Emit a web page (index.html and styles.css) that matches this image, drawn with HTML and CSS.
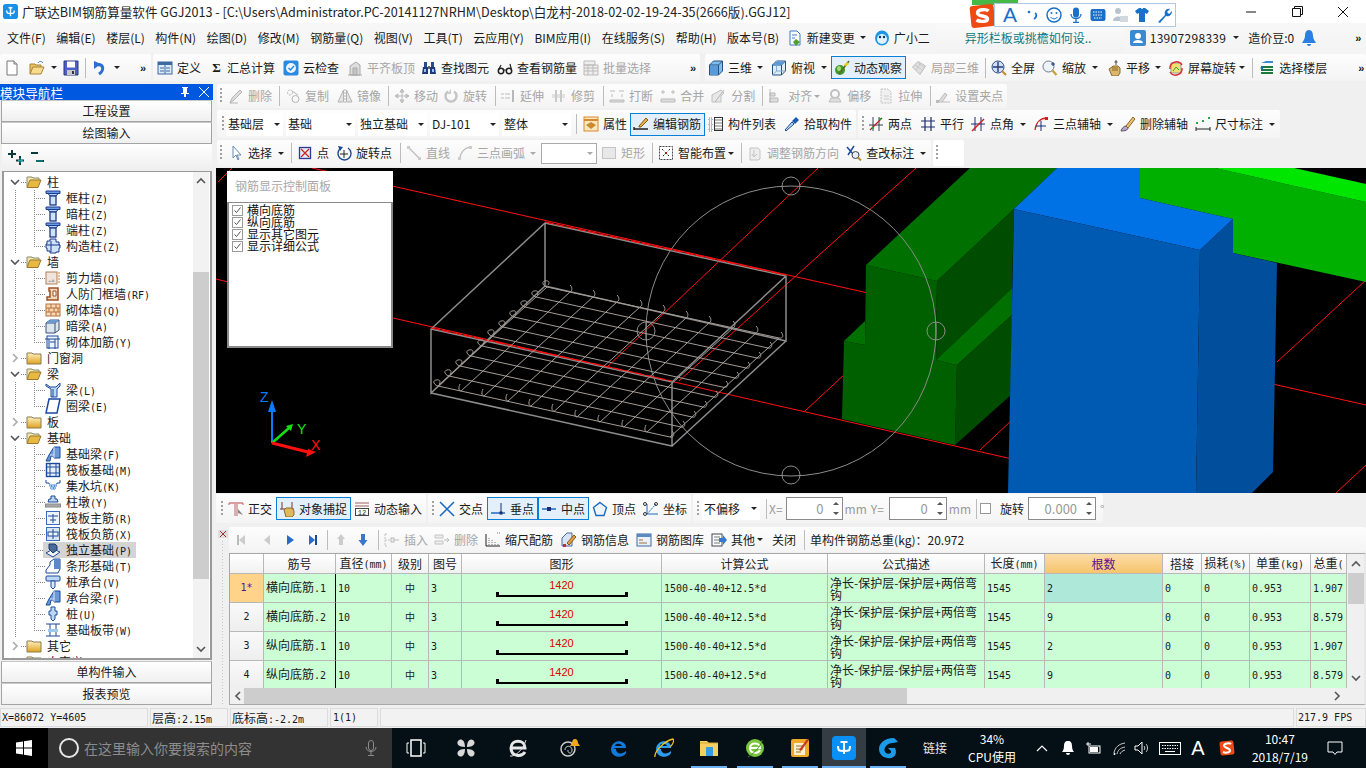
FILE: index.html
```html
<!DOCTYPE html>
<html lang="zh-CN">
<head>
<meta charset="utf-8">
<title>广联达BIM钢筋算量软件 GGJ2013</title>
<link rel="stylesheet" href="styles.css">
</head>
<body>
<svg class="defs" aria-hidden="true">
<symbol id="new" viewBox="0 0 16 16"><path d="M3 1h7l3 3v11H3z" fill="#fff" stroke="#777"/><path d="M10 1v3h3" fill="#ddd" stroke="#777"/></symbol>
<symbol id="open" viewBox="0 0 16 16"><path d="M1 14V4h5l1 1h5v2" fill="#e8c060" stroke="#a8843a"/><path d="M1 14l3-7h11l-3 7z" fill="#f7dc8e" stroke="#a8843a"/><path d="M9 3c1-2 4-2 5 0" stroke="#3a78c8" fill="none"/></symbol>
<symbol id="save" viewBox="0 0 16 16"><path d="M1 1h14v14H1z" fill="#5060c8" stroke="#2a3480"/><rect x="4" y="1.500" width="8" height="6" fill="#fff"/><rect x="4" y="10" width="8" height="5" fill="#c8c8c8"/><rect x="9" y="11" width="2" height="3" fill="#334"/></symbol>
<symbol id="undo" viewBox="0 0 16 16"><path d="M6 5c5-1 7 5 1 9" stroke="#2a70d0" stroke-width="3" fill="none"/><path d="M2 1v8l7-5z" fill="#2a70d0"/></symbol>
<symbol id="def" viewBox="0 0 16 16"><rect x="1" y="2" width="14" height="12" fill="#dce9f6" stroke="#3a6aa0"/><rect x="1" y="2" width="14" height="3" fill="#3a6aa0"/><path d="M3 8h4M3 11h4M9 8h4M9 11h4M8 5v9" stroke="#3a6aa0"/></symbol>
<symbol id="cloud" viewBox="0 0 16 16"><rect x="0.500" y="0.500" width="15" height="15" rx="2" fill="#2a8ae0"/><circle cx="8" cy="8" r="5" fill="#eaf4fd"/><path d="M5.500 8l2 2 3.500-4" stroke="#2a8ae0" stroke-width="1.500" fill="none"/></symbol>
<symbol id="align" viewBox="0 0 16 16"><path d="M3 15V6l6-4 4 3v10z" fill="#ddd" stroke="#aaa"/><path d="M6 8h4v7H6zM1 15h14" fill="#c4c4c4" stroke="#aaa"/></symbol>
<symbol id="find" viewBox="0 0 16 16"><path d="M3 2h3v5H3zM10 2h3v5h-3z" fill="#2a4a8a"/><path d="M2 7h5v7H1zM9 7h5l1 7H9z" fill="#1c3a7a"/><path d="M7 6h2v3H7z" fill="#666"/><path d="M3 9h2v3H3zM11 9h2v3h-2z" fill="#9ac0ee"/></symbol>
<symbol id="look" viewBox="0 0 16 16"><circle cx="4" cy="11" r="2.700" fill="none" stroke="#222" stroke-width="1.500"/><circle cx="12" cy="11" r="2.700" fill="none" stroke="#222" stroke-width="1.500"/><path d="M6.500 10h3M1.500 10L4 5M14.500 10L13 4" stroke="#222" fill="none" stroke-width="1.200"/></symbol>
<symbol id="batch" viewBox="0 0 16 16"><path d="M1 1h11v4H1zM1 5h14v10H1z" fill="#eee" stroke="#bbb"/><path d="M1 8h14M1 11h14M5 5v10M10 5v10" stroke="#bbb"/></symbol>
<symbol id="cube" viewBox="0 0 16 16"><path d="M1.500 5l4-4h9v10l-4 4h-9z" fill="#82bced" stroke="#24527e"/><path d="M1.500 5h9v10M10.500 5l4-4" fill="none" stroke="#24527e"/><path d="M2 5.500h8V15H2z" fill="#5a9ad8"/></symbol>
<symbol id="tops" viewBox="0 0 16 16"><path d="M1.500 5l4-4h9v10l-4 4h-9z" fill="#dcecfa" stroke="#24527e"/><path d="M1.500 5h9v10M10.500 5l4-4" fill="none" stroke="#24527e"/><path d="M5.500 1v10h9M5.500 11l-4 4" fill="none" stroke="#88aacc"/><path d="M6 1.500h8L10 5H2z" fill="#5a9ad8"/></symbol>
<symbol id="orbit" viewBox="0 0 16 16"><ellipse cx="6" cy="10" rx="5" ry="5" fill="#3f9a2e"/><ellipse cx="5" cy="8.500" rx="2" ry="2.500" fill="#a6dc78"/><path d="M5 14L15 1" stroke="#5b6b2a" stroke-width="1.600"/><path d="M10 5l3-3 2 2-3 2z" fill="#f0d000"/></symbol>
<symbol id="loc3d" viewBox="0 0 16 16"><path d="M1.500 7L7 1.500 14.500 6 9 14.500z" fill="#e0e0e0" stroke="#bbb"/><path d="M4 5l7 5M7 2.500l6 5M5 10l4-6" stroke="#c8c8c8"/></symbol>
<symbol id="full" viewBox="0 0 16 16"><circle cx="7" cy="7" r="6" fill="#d0e0f5" stroke="#2c4a80"/><path d="M7 2v10M2 7h10" stroke="#243c7a" stroke-width="1.400"/><path d="M11 11l4 4" stroke="#c08a30" stroke-width="2"/></symbol>
<symbol id="zoomi" viewBox="0 0 16 16"><circle cx="6.500" cy="6.500" r="5.500" fill="#eef3f8" stroke="#6a7a90"/><path d="M10.500 10.500l4 4.500" stroke="#c8a030" stroke-width="2.200"/><path d="M11 2v4M9 4h4" stroke="#1c3a7a"/></symbol>
<symbol id="pan" viewBox="0 0 16 16"><path d="M3 9l3-2 1-1h5l2 2v5l-2 3H6z" fill="#dcb66a" stroke="#8a6a2a"/><path d="M7 7v4M9 7v4M11 7v4" stroke="#8a6a2a"/><path d="M10 0v5M8.500 2h3" stroke="#445"/></symbol>
<symbol id="rota" viewBox="0 0 16 16"><rect x="3" y="3" width="10" height="10" fill="#f0e070" stroke="#90a0b0"/><path d="M5 11l3-4 3 3" stroke="#40a040" fill="none"/><path d="M2 9a6.500 6.500 0 0 1 12-4M14 8a6.500 6.500 0 0 1-12 4" stroke="#d83030" stroke-width="1.400" fill="none"/></symbol>
<symbol id="floors" viewBox="0 0 16 16"><path d="M2 3l5-2h7v2H7z" fill="#3a8ad8"/><path d="M2 7h12M2 10h12M2 13h12" stroke="#1c7a3a" stroke-width="2"/><path d="M1 8l3-2v4z" fill="#1c6a9a"/></symbol>
<symbol id="del" viewBox="0 0 16 16"><path d="M2 15l2-5 8-8 2 2-8 8z" fill="#ddd" stroke="#b4b4b4"/><path d="M2 15h8" stroke="#b4b4b4"/></symbol>
<symbol id="copy" viewBox="0 0 16 16"><circle cx="5" cy="4.500" r="2.500" fill="none" stroke="#b4b4b4" stroke-dasharray="2 1"/><circle cx="10.500" cy="11" r="3.500" fill="none" stroke="#b4b4b4"/><path d="M7 3l6 4" stroke="#b4b4b4"/></symbol>
<symbol id="mirr" viewBox="0 0 16 16"><path d="M6.500 2v12H1zM9.500 2v12H15z" fill="#e4e4e4" stroke="#b4b4b4"/><path d="M8 1v14" stroke="#b4b4b4" stroke-dasharray="2 1"/></symbol>
<symbol id="move" viewBox="0 0 16 16"><path d="M8 1v14M1 8h14M8 1L6 4h4zM8 15l-2-3h4zM1 8l3-2v4zM15 8l-3-2v4z" stroke="#bbb" fill="#ccc"/></symbol>
<symbol id="roti" viewBox="0 0 16 16"><path d="M5 3.500a5.500 5.500 0 1 0 6 0" stroke="#c4c4c4" stroke-width="2.400" fill="none"/><path d="M8 1v5H4" fill="#ccc"/></symbol>
<symbol id="ext" viewBox="0 0 16 16"><path d="M13 2v12" stroke="#b8b8b8" stroke-width="2"/><path d="M1 6h3M1 10h3M5 6h5M5 10h5" stroke="#bbb"/></symbol>
<symbol id="trim" viewBox="0 0 16 16"><path d="M5 2v12M10 2v12" stroke="#bbb" stroke-width="1.500"/><path d="M1 7h13M1 9h13" stroke="#ccc"/></symbol>
<symbol id="brk" viewBox="0 0 16 16"><path d="M1 3h5M10 3h5M1 12h14v2H1z" stroke="#bbb" fill="#ddd"/><path d="M3 6v3M13 6v3" stroke="#bbb"/></symbol>
<symbol id="merg" viewBox="0 0 16 16"><path d="M1 4h4M11 4h4M3 2v4M13 2v4" stroke="#bbb"/><path d="M1 11h14v3H1z" fill="#ddd" stroke="#bbb"/></symbol>
<symbol id="splt" viewBox="0 0 16 16"><path d="M1 14V7l9-5 3 3-3 3v6z" fill="#e8e8e8" stroke="#c0c0c0"/><path d="M4 14l9-12" stroke="#b4b4b4"/></symbol>
<symbol id="algn" viewBox="0 0 16 16"><path d="M2 1v14M2 5h5v3H2zM2 10h8v4H2z" fill="#ddd" stroke="#b8b8b8"/></symbol>
<symbol id="offs" viewBox="0 0 16 16"><circle cx="8" cy="6" r="4" fill="none" stroke="#c0c0c0" stroke-width="2"/><path d="M2 14h12l-2-4H4z" fill="#ddd" stroke="#c0c0c0"/></symbol>
<symbol id="strc" viewBox="0 0 16 16"><path d="M3 1h7l3 3v11H3z" fill="#f0f0f0" stroke="#c0c0c0" stroke-dasharray="2 1"/><path d="M6 8h5M6 11h5" stroke="#ccc"/></symbol>
<symbol id="grip" viewBox="0 0 16 16"><path d="M3 14l7-9 2 2-5 7z" fill="#ddd" stroke="#bbb"/><rect x="1" y="12" width="3" height="3" fill="#bbb"/><path d="M7 14h8" stroke="#bbb"/></symbol>
<symbol id="attr" viewBox="0 0 16 16"><rect x="1" y="1" width="14" height="14" fill="#fbe7bd" stroke="#d98a2a"/><path d="M1 4h14" stroke="#d98a2a" stroke-width="2"/><path d="M3 9l5-3 5 3-5 4z" fill="#c98a30"/></symbol>
<symbol id="edit" viewBox="0 0 16 16"><path d="M6 10l7-8 2 2-7 7H6z" fill="#e8b040" stroke="#8a5a20"/><path d="M1 13h14M1 11v3" stroke="#222" stroke-width="1.400"/></symbol>
<symbol id="list" viewBox="0 0 16 16"><path d="M1 2h3v3H1zM1 7h3v3H1zM1 12h3v3H1z" fill="none" stroke="#4a7ab0" stroke-dasharray="1 1"/><rect x="6.500" y="1.500" width="8" height="13" fill="#fff" stroke="#333"/><path d="M7 4h7M7 7h7M7 10h7M7 13h7" stroke="#777"/></symbol>
<symbol id="pick" viewBox="0 0 16 16"><path d="M2 15l-1-1 7-8 2 2z" fill="#bcd8f4" stroke="#1c4a9a"/><path d="M8 5l4-4 3 3-4 4z" fill="#1c5ab0"/></symbol>
<symbol id="twop" viewBox="0 0 16 16"><path d="M5 1v14M11 1v14M1 9h14" stroke="#345"/><path d="M2 14L14 2" stroke="#c02020" stroke-width="1.200"/><path d="M4 11h2v2H4zM11 2h2v2h-2z" fill="#30a040"/></symbol>
<symbol id="para" viewBox="0 0 16 16"><path d="M1 5h14M1 11h14M5 1v14M11 1v14" stroke="#1c2a70" stroke-width="1.200"/></symbol>
<symbol id="angl" viewBox="0 0 16 16"><path d="M5 1v14M11 1v14M1 8h14" stroke="#1c2a70"/><path d="M2 15L14 3" stroke="#d02020" stroke-width="1.400"/></symbol>
<symbol id="tri" viewBox="0 0 16 16"><path d="M2 14C3 6 8 2 14 2" stroke="#d02020" fill="none" stroke-width="1.300"/><path d="M8 5v10M3 10h10" stroke="#1c2a70"/><rect x="12" y="1" width="3" height="3" fill="#d02020"/></symbol>
<symbol id="dela" viewBox="0 0 16 16"><path d="M1 15c1-3 3-5 5-5l2 2c0 2-3 3-7 3z" fill="#c0a0d0" stroke="#555"/><path d="M6 10l7-9 2 2-7 9z" fill="#e8c070" stroke="#8a6a2a"/></symbol>
<symbol id="dim" viewBox="0 0 16 16"><path d="M1 11v4M15 11v4M1 13h14" stroke="#222"/><path d="M1 6h2v2H1zM13 1h2v2h-2zM7 4h2v2H7z" fill="#30a040"/></symbol>
<symbol id="arrow" viewBox="0 0 16 16"><path d="M5 1v12l3-3 2 5 1-1-2-4h4z" fill="#fff" stroke="#6a8ab0"/></symbol>
<symbol id="pt" viewBox="0 0 16 16"><rect x="2.500" y="2.500" width="11" height="11" fill="#e4ecfa" stroke="#2c3a9a" stroke-width="1.300"/><path d="M4 4l8 8M12 4l-8 8" stroke="#d02020" stroke-width="1.300"/></symbol>
<symbol id="rotp" viewBox="0 0 16 16"><path d="M5 3a6.500 6.500 0 1 0 7 0" fill="none" stroke="#1c4a90" stroke-width="1.400"/><path d="M8 5v8M4 9h8" stroke="#222"/><path d="M2 1l5 1-3 4z" fill="#1c4a90"/></symbol>
<symbol id="line" viewBox="0 0 16 16"><path d="M2 2l12 12" stroke="#c0c0c0" stroke-width="1.400"/><rect x="1" y="1" width="3" height="3" fill="#ccc"/><rect x="12" y="12" width="3" height="3" fill="#ccc"/></symbol>
<symbol id="arc" viewBox="0 0 16 16"><path d="M3 14C3 8 7 3 13 2" stroke="#c0c0c0" fill="none" stroke-width="1.400"/><rect x="1" y="12" width="3" height="3" fill="#ccc"/><rect x="12" y="1" width="3" height="3" fill="#ccc"/></symbol>
<symbol id="rect" viewBox="0 0 16 16"><rect x="1.500" y="2.500" width="13" height="11" fill="#e8e8e8" stroke="#c4c4c4"/></symbol>
<symbol id="smart" viewBox="0 0 16 16"><rect x="1.500" y="1.500" width="13" height="13" fill="#fff" stroke="#445" stroke-dasharray="2 1"/><path d="M4 4l8 8M12 4l-8 8" stroke="#222" stroke-dasharray="2 2"/><path d="M7 7h2v2H7z" fill="#a02020"/></symbol>
<symbol id="adj" viewBox="0 0 16 16"><path d="M3 3h8l2 2v9l-2 1H3z" fill="#eee" stroke="#c4c4c4"/><path d="M7 5v7M5 9l2 3 3-3" stroke="#c4c4c4" fill="none"/></symbol>
<symbol id="chk" viewBox="0 0 16 16"><path d="M1 2l6 7M8 1L2 10" stroke="#1c4a9a" stroke-width="1.500"/><circle cx="9.500" cy="10" r="3.500" fill="#e8eef6" stroke="#444"/><path d="M12 12.500l3 3" stroke="#b88a30" stroke-width="2"/></symbol>
<symbol id="orth" viewBox="0 0 16 16"><path d="M1 2h14M1 2v2M15 2v2" stroke="#d08080" stroke-width="1.300"/><path d="M6 3h4v12H6z" fill="#d8b0b0"/><path d="M10 8l5 6-5-2z" fill="#888"/></symbol>
<symbol id="snap" viewBox="0 0 16 16"><path d="M3 1v7M13 1v7M1 8h14" stroke="#7a3020"/><path d="M5 9l2-2h6l2 3v4l-2 2H7z" fill="#e0b860" stroke="#8a6a2a"/></symbol>
<symbol id="dyn" viewBox="0 0 16 16"><path d="M1 2h14M1 5h14" stroke="#a06060"/><rect x="1.500" y="7.500" width="13" height="7" fill="#fff" stroke="#444"/><text x="8" y="14" font-size="7" text-anchor="middle" font-family="Liberation Mono,monospace" fill="#222">12</text></symbol>
<symbol id="cross" viewBox="0 0 16 16"><path d="M1 1l14 14M15 1L1 15" stroke="#1c6ac0" stroke-width="1.500"/></symbol>
<symbol id="perp" viewBox="0 0 16 16"><path d="M1 12h14" stroke="#1c6ac0" stroke-width="1.500"/><path d="M11 2v10" stroke="#1c2a70"/><rect x="9.500" y="10.500" width="3" height="3" fill="#1c2a70"/></symbol>
<symbol id="midp" viewBox="0 0 16 16"><path d="M1 8h14" stroke="#1c6ac0" stroke-width="1.500"/><rect x="6" y="6" width="4" height="4" fill="#1c2a70"/></symbol>
<symbol id="vert" viewBox="0 0 16 16"><path d="M8 1.500l6.500 5-2.500 8H4l-2.500-8z" fill="#eef4fc" stroke="#1c6ac0" stroke-width="1.400"/></symbol>
<symbol id="coor" viewBox="0 0 16 16"><path d="M4 3v10h11" stroke="#1c6ac0" fill="none"/><path d="M4 13L13 3" stroke="#1c6ac0" stroke-dasharray="2 1"/><circle cx="2" cy="3" r="1.500" fill="none" stroke="#333"/><circle cx="13" cy="3" r="1.500" fill="none" stroke="#333"/><circle cx="2" cy="13" r="1.500" fill="none" stroke="#333"/></symbol>
<symbol id="first" viewBox="0 0 10 16"><path d="M1 3h2v10H1z" fill="#bbb"/><path d="M9 3v10L3 8z" fill="#ccc"/></symbol>
<symbol id="prev" viewBox="0 0 10 16"><path d="M8 3v10L2 8z" fill="#ccc"/></symbol>
<symbol id="next" viewBox="0 0 10 16"><path d="M2 3v10l7-5z" fill="#2a6ac8"/></symbol>
<symbol id="last" viewBox="0 0 10 16"><path d="M1 3v10l6-5z" fill="#2a6ac8"/><path d="M7 3h2v10H7z" fill="#1c4a9a"/></symbol>
<symbol id="up" viewBox="0 0 10 16"><path d="M5 2l4 5H7v6H3V7H1z" fill="#ccc"/></symbol>
<symbol id="down" viewBox="0 0 10 16"><path d="M3 2h4v6h2.500L5 14 .5 8H3z" fill="#3a78d0"/></symbol>
<symbol id="ins" viewBox="0 0 16 16"><path d="M1 2v12M1 2h3M1 14h3M1 8h9" stroke="#c4c4c4" stroke-dasharray="2 1"/><rect x="7" y="6" width="3" height="4" fill="#eee" stroke="#bbb"/><path d="M10 8h5" stroke="#bbb"/></symbol>
<symbol id="dele" viewBox="0 0 16 16"><path d="M1 3h8v3H1zM1 9h8v3H1z" fill="#eee" stroke="#c4c4c4"/><path d="M10 8h5M13 6l2 2-2 2" stroke="#bbb" fill="none"/></symbol>
<symbol id="scal" viewBox="0 0 16 16"><path d="M1 2v12h14" stroke="#222" fill="none"/><path d="M4 13V5M7 13V8M10 13v-3M13 13v-1M12 1h3" stroke="#777" stroke-dasharray="1 1"/></symbol>
<symbol id="info" viewBox="0 0 16 16"><path d="M1 14V6l5-5h5v13z" fill="#d8e4f4" stroke="#4a6a9a"/><path d="M6 11l7-8 2 2-7 8z" fill="#e0a040" stroke="#8a5a20"/><rect x="2" y="12" width="3" height="3" fill="#c03030"/></symbol>
<symbol id="lib" viewBox="0 0 16 16"><rect x="1" y="2" width="14" height="12" fill="#eaf1fa" stroke="#3a6aa0"/><rect x="1" y="2" width="14" height="3" fill="#5a8ac0"/><path d="M3 8h4M3 11h8" stroke="#a07030"/></symbol>
<symbol id="oth" viewBox="0 0 16 16"><rect x="1" y="2" width="10" height="12" fill="#fff" stroke="#445"/><path d="M3 5h6M3 8h6M3 11h6" stroke="#777"/><path d="M8 6h4V3l4 5-4 5v-3H8z" fill="#3a78d0"/></symbol>
<symbol id="fopen" viewBox="0 0 16 16"><path d="M1 13V3h5l1 1h6v2" fill="#f4e4b0" stroke="#8a8a6a"/><path d="M1 13.500L4 6h11l-3 7.500z" fill="#e8b840" stroke="#9a7a30"/></symbol>
<symbol id="fclose" viewBox="0 0 16 16"><path d="M1 14V3h5l1 1h8v10z" fill="url(#fg)" stroke="#8a7a50"/></symbol>
<linearGradient id="fg" x1="0" y1="0" x2="0" y2="1"><stop offset="0" stop-color="#fdf2c0"/><stop offset="1" stop-color="#e0a020"/></linearGradient>
<symbol id="tc" viewBox="0 0 16 16"><path d="M1 1h14v2.500H1z" fill="#6a9ae0" stroke="#1a3a8a"/><path d="M3 3.500h10L11 6H5z" fill="#bcd4f4" stroke="#1a3a8a"/><rect x="5" y="6" width="6" height="9" fill="#cfe2fa" stroke="#1a3a8a" stroke-width="1.300"/></symbol>
<symbol id="gz" viewBox="0 0 16 16"><path d="M5 1h6v3h3v3h1v3h-1v4h-3v1H5v-2H2v-3H1V6h1V3h3z" fill="#cfe2fa" stroke="#1a3a8a"/><path d="M6 3v11M1 7h14" stroke="#1a3a8a"/></symbol>
<symbol id="shear" viewBox="0 0 16 16"><rect x="1" y="2" width="11" height="12" fill="#f0e4dc" stroke="#b0805a"/><path d="M3 12l2-2 1 2 2-3 2 3H3z" fill="#aaa"/><path d="M13 3h2M13 6h2M13 9h2M13 12h2" stroke="#d08040"/></symbol>
<symbol id="rf" viewBox="0 0 16 16"><path d="M4 2h9v12H2v-3h3V5H4z" fill="#f0d8c0" stroke="#a05020" stroke-width="1.500"/><path d="M8 5h3v5H8z" fill="#fff" stroke="#a05020"/></symbol>
<symbol id="brick" viewBox="0 0 16 16"><rect x="1" y="2" width="14" height="12" fill="#f6d8b8" stroke="#b8703a"/><path d="M1 6h14M1 10h14M6 2v4M11 2v4M4 6v4M9 6v4M13 6v4M6 10v4M11 10v4" stroke="#b8703a"/></symbol>
<symbol id="hbeam" viewBox="0 0 16 16"><path d="M1 5l4-3h9v10l-4 3H1z" fill="#dce4ec" stroke="#34527e"/><path d="M1 5h9v10M10 5l4-3" fill="none" stroke="#34527e"/><path d="M1 5h9l4-3H5z" fill="#6a9ad0"/></symbol>
<symbol id="mas" viewBox="0 0 16 16"><rect x="2" y="2" width="11" height="12" fill="#eef4fb" stroke="#1a4aa0"/><path d="M0 5h15M4 5v10M10 5v10M5 8h5" stroke="#1a4aa0"/></symbol>
<symbol id="bm" viewBox="0 0 16 16"><path d="M1 2l4 3h6l4-4v3l-3 3v8H6V7L1 4z" fill="#bcd8f4" stroke="#1a4a9a"/><path d="M8 7v8" stroke="#1a4a9a"/></symbol>
<symbol id="ring" viewBox="0 0 16 16"><path d="M4 1h11l-3 14H1z" fill="#fff" stroke="#1a4aa0" stroke-width="1.500"/></symbol>
<symbol id="fbm" viewBox="0 0 16 16"><path d="M1 15l3-6 5-8h6v11H9l-1-2H6l-1 5z" fill="#6a98d8" stroke="#1a4a9a"/><path d="M9 1v11M5 9h4" stroke="#dce8f8"/></symbol>
<symbol id="raft" viewBox="0 0 16 16"><rect x="1.500" y="1.500" width="13" height="13" fill="#e8f0fb" stroke="#1a4a9a" stroke-width="1.400"/><path d="M5 1v14M11 1v14M1 5h14M1 11h14" stroke="#1a4a9a"/></symbol>
<symbol id="sump" viewBox="0 0 16 16"><path d="M1 2v3h3l2 6h4l2-6h3V2" fill="none" stroke="#1a4a9a"/><path d="M4 6h8l-2 6H6z" fill="#9cc8ee"/><path d="M6 8h1M9 8h1M8 10h1" stroke="#1a4a9a"/></symbol>
<symbol id="pier" viewBox="0 0 16 16"><path d="M6 2h4v3h2l1 3H3l1-3h2z" fill="#bcd4ec" stroke="#1a4a9a"/><rect x="0.500" y="10" width="15" height="3" fill="#aaa" stroke="#888"/></symbol>
<symbol id="rm" viewBox="0 0 16 16"><rect x="1.500" y="1.500" width="13" height="13" fill="#eef4fc" stroke="#3a6ac0"/><path d="M3 6h10M8 4v9M5 10h6" stroke="#1a4a9a"/></symbol>
<symbol id="rn" viewBox="0 0 16 16"><rect x="1.500" y="1.500" width="13" height="13" fill="#d8e6f6" stroke="#3a6ac0"/><rect x="3" y="6" width="10" height="4" fill="#f0f4fa" stroke="#1a4a9a"/><path d="M8 3v10" stroke="#1a4a9a"/></symbol>
<symbol id="ind" viewBox="0 0 16 16"><path d="M1 11l7-4 7 3-7 5z" fill="#f0f4fb" stroke="#1a4a9a"/><path d="M4 7V2h6l2 2v4l-4 3z" fill="#4a6a9a" stroke="#1a3a6a"/></symbol>
<symbol id="strip" viewBox="0 0 16 16"><path d="M1 15v-3l4-5V4l4-3h6v10l-2 4z" fill="#fff" stroke="#1a4a9a"/><path d="M9 1v10h6V1z" fill="#5a88c8"/></symbol>
<symbol id="capv" viewBox="0 0 16 16"><rect x="1" y="2" width="14" height="5" rx="1" fill="#bcd8f4" stroke="#1a4a9a"/><path d="M6 7h4v6l-2 2-2-2z" fill="#dce8f8" stroke="#1a4a9a"/></symbol>
<symbol id="pile" viewBox="0 0 16 16"><path d="M6 1h4v4h2v4h-2v4l-2 2-2-2V9H4V5h2z" fill="#bcd8f4" stroke="#1a4a9a"/></symbol>
<symbol id="band" viewBox="0 0 16 16"><path d="M1 2h14M1 14h14M5 2v12M11 2v12" stroke="#1a4a9a"/><path d="M3 7h10v3H3z" fill="#9cc8ee"/></symbol>
<symbol id="chevd" viewBox="0 0 10 10"><path d="M1 3l4 4 4-4" fill="none" stroke="#555" stroke-width="1.600"/></symbol>
<symbol id="chevr" viewBox="0 0 10 10"><path d="M3 1l4 4-4 4" fill="none" stroke="#aaa" stroke-width="1.600"/></symbol>
<symbol id="chevu" viewBox="0 0 10 10"><path d="M1 7l4-4 4 4" fill="none" stroke="#555" stroke-width="1.600"/></symbol>
<symbol id="chevl" viewBox="0 0 10 10"><path d="M7 1L3 5l4 4" fill="none" stroke="#555" stroke-width="1.600"/></symbol>
<symbol id="chevrd" viewBox="0 0 10 10"><path d="M3 1l4 4-4 4" fill="none" stroke="#555" stroke-width="1.600"/></symbol>
<symbol id="ck" viewBox="0 0 11 11"><rect x="0.500" y="0.500" width="10" height="10" fill="#fff" stroke="#9a9a9a"/><path d="M2.500 5.500l2 2 4-5" fill="none" stroke="#555"/></symbol>
</svg>

<div class="app">
<header class="title">
  <svg class="appic" viewBox="0 0 16 16"><rect width="16" height="16" rx="3" fill="#1790e8"/><path d="M8 3v10M4 7c0 3 1 3 4 3s4 0 4-3M6 4h4" stroke="#fff" stroke-width="1.500" fill="none"/></svg>
  <span class="ttext">广联达BIM钢筋算量软件 GGJ2013 - [C:\Users\Administrator.PC-20141127NRHM\Desktop\白龙村-2018-02-02-19-24-35(2666版).GGJ12]</span>
  <div class="winbtns">
    <svg viewBox="0 0 46 23"><path d="M18 12h10" stroke="#111"/></svg>
    <svg viewBox="0 0 46 23"><path d="M18.500 8.500h8v8h-8zM20.500 8.500v-2h8v8h-2" fill="none" stroke="#111"/></svg>
    <svg viewBox="0 0 46 23"><path d="M18 7l10 10M28 7L18 17" stroke="#111"/></svg>
  </div>
</header>

<aside class="ime">
  <div class="imegreen"></div>
  <svg class="imes" viewBox="0 0 28 24"><rect x="2" y="1" width="24" height="22" rx="3" fill="#f04a14" transform="rotate(-6 14 12)"/><path d="M20 7c-2-2-11-2-11 2 0 4 10 2 10 6 0 3-8 3-11 1" fill="none" stroke="#fff" stroke-width="3.400"/></svg>
  <div class="imebar">
    <span class="imea">A</span>
    <svg class="ic" viewBox="0 0 16 16"><circle cx="5" cy="5" r="1.300" fill="#1a70c8"/><path d="M11 6c2 1 2 4-1 6" stroke="#1a70c8" stroke-width="1.800" fill="none"/></svg>
    <svg class="ic" viewBox="0 0 16 16"><circle cx="8" cy="8" r="7" fill="none" stroke="#1a70c8" stroke-width="1.500"/><circle cx="5.500" cy="6" r="1" fill="#1a70c8"/><circle cx="10.500" cy="6" r="1" fill="#1a70c8"/><path d="M4.500 10c2 2.500 5 2.500 7 0" fill="none" stroke="#1a70c8"/></svg>
    <svg class="ic" viewBox="0 0 16 16"><rect x="5" y="0.500" width="6" height="10" rx="3" fill="#1a70c8"/><path d="M3 7c0 6 10 6 10 0M8 12v3M5 15.500h6" fill="none" stroke="#1a70c8" stroke-width="1.300"/></svg>
    <svg class="ic" viewBox="0 0 16 16"><rect x="0.500" y="2" width="15" height="12" rx="2" fill="#1a70c8"/><path d="M3 5h10M3 8h10M4 11h8" stroke="#fff" stroke-dasharray="1.500 1"/></svg>
    <svg class="ic" viewBox="0 0 16 16"><circle cx="6" cy="4" r="3" fill="#b8c4d0"/><path d="M1 14c0-6 10-6 10 0z" fill="#b8c4d0"/><rect x="8" y="9" width="8" height="6" fill="#d0d8e0"/></svg>
    <svg class="ic" viewBox="0 0 16 16"><path d="M5 1L1 4l2 3 2-1v9h6V6l2 1 2-3-4-3H9a1 1 0 0 1-2 0z" fill="#1a70c8"/></svg>
    <svg class="ic" viewBox="0 0 16 16"><path d="M2 15l7-7c-1-3 1-7 5-6l-3 3 2 2 3-3c0 4-3 6-6 5l-6 7z" fill="#1a70c8"/></svg>
  </div>
</aside>

<nav class="menu">
  <span class="mi">文件(F)</span><span class="mi">编辑(E)</span><span class="mi">楼层(L)</span><span class="mi">构件(N)</span><span class="mi">绘图(D)</span><span class="mi">修改(M)</span><span class="mi">钢筋量(Q)</span><span class="mi">视图(V)</span><span class="mi">工具(T)</span><span class="mi">云应用(Y)</span><span class="mi">BIM应用(I)</span><span class="mi">在线服务(S)</span><span class="mi">帮助(H)</span><span class="mi">版本号(B)</span>
  <span class="it mln3"><svg class="ic" viewBox="0 0 16 16"><path d="M3 1h7l3 3v11H3z" fill="#fff" stroke="#3a7ac8"/><path d="M5 5h5M5 8h3" stroke="#3a7ac8"/><path d="M9 9l4 3-4 4-3-4z" fill="#50a030"/></svg>新建变更</span>
  <i class="dd ml5"></i>
  <span class="it ml8"><svg class="ic big" viewBox="0 0 16 16"><ellipse cx="8" cy="8" rx="7" ry="7.500" fill="#1c96e8"/><ellipse cx="8" cy="9" rx="5" ry="5" fill="#dff2fd"/><circle cx="6" cy="7" r="1.200" fill="#135"/><circle cx="10" cy="7" r="1.200" fill="#135"/></svg>广小二</span>
  <div class="tip">异形栏板或挑檐如何设..</div>
  <span class="it ml6 gap5"><svg class="ic" viewBox="0 0 16 16"><rect width="16" height="16" rx="2" fill="#3a8ad0"/><circle cx="8" cy="6" r="3" fill="#fff"/><path d="M3 13c0-4 10-4 10 0z" fill="#fff"/></svg><span class="phone">13907298339</span></span>
  <i class="dd ml7"></i>
  <span class="ml9">造价豆:0</span>
  <svg class="ic ml7" viewBox="0 0 16 16"><path d="M8 0c3 0 4 3 4 6 0 3 2 5 3 7H1c1-2 3-4 3-7 0-3 1-6 4-6z" fill="#2a80e0"/><path d="M6 14a2 2 0 0 0 4 0z" fill="#2a80e0"/></svg>
  <span class="chev ml38">»</span>
</nav>

<div class="tb1">
  <div class="seg s1a">
    <svg class="ic"><use href="#new"/></svg><svg class="ic ml9"><use href="#open"/></svg><i class="dd ml6"></i><svg class="ic ml6"><use href="#save"/></svg><i class="sep ml6"></i><svg class="ic ml6"><use href="#undo"/></svg><i class="dd ml6"></i><span class="chev ml20">»</span>
  </div>
  <div class="seg s1b">
    <span class="it"><svg class="ic"><use href="#def"/></svg>定义</span>
    <span class="it ml9"><b class="sig">Σ</b>汇总计算</span>
    <span class="it ml8"><svg class="ic"><use href="#cloud"/></svg>云检查</span>
    <span class="it ml8 off"><svg class="ic"><use href="#align"/></svg>平齐板顶</span>
    <span class="it ml6"><svg class="ic"><use href="#find"/></svg>查找图元</span>
    <span class="it ml8"><svg class="ic"><use href="#look"/></svg>查看钢筋量</span>
    <span class="it ml6 off"><svg class="ic"><use href="#batch"/></svg>批量选择</span>
    <span class="chev ml39">»</span>
  </div>
  <div class="seg s1c">
    <span class="it"><svg class="ic"><use href="#cube"/></svg>三维</span><i class="dd ml5"></i>
    <span class="it ml8"><svg class="ic"><use href="#tops"/></svg>俯视</span><i class="dd ml6"></i>
    <span class="it box ml4"><svg class="ic"><use href="#orbit"/></svg>动态观察</span>
    <span class="it ml5 off"><svg class="ic"><use href="#loc3d"/></svg>局部三维</span>
    <i class="sep ml6"></i>
    <span class="it ml5"><svg class="ic"><use href="#full"/></svg>全屏</span>
    <span class="it ml7"><svg class="ic"><use href="#zoomi"/></svg>缩放</span><i class="dd ml6"></i>
    <span class="it ml8"><svg class="ic"><use href="#pan"/></svg>平移</span><i class="dd ml5"></i>
    <span class="it ml7"><svg class="ic"><use href="#rota"/></svg>屏幕旋转</span><i class="dd ml3"></i>
    <i class="sep ml7"></i>
    <span class="it ml6"><svg class="ic"><use href="#floors"/></svg>选择楼层</span>
    <span class="chev ml31">»</span>
  </div>
</div>

<div class="work">
  <aside class="nav">
    <div class="navhead"><span>模块导航栏</span>
      <svg class="navic" viewBox="0 0 12 12"><path d="M3 1h6v1H8v5h2v1H7v3H5V8H2V7h2V2H3z" fill="#fff"/></svg>
      <svg class="navic navx" viewBox="0 0 12 12"><path d="M1 1l10 10M11 1L1 11" stroke="#fff"/></svg>
    </div>
    <div class="navbtn">工程设置</div>
    <div class="navbtn">绘图输入</div>
    <div class="treebar">
      <svg viewBox="0 0 40 18" class="plusmin"><path d="M5 1v8M1 5h8M13 7v9M9 11.500h8" stroke="#0a3a3a" stroke-width="2"/><path d="M24 4h7M29 12h8" stroke="#0a3a3a" stroke-width="2"/><path d="M13 9v5M11 11.500h5M29 12h7" stroke="#13a8a8" stroke-width="1"/></svg>
    </div>
    <div class="tree">
      <div class="treelist">
        <div class="trow"><svg class="tchev"><use href="#chevd"/></svg><i class="tdash"></i><svg class="ic"><use href="#fopen"/></svg><span class="tlab">柱</span></div>
        <div class="kids">
          <div class="kid"><svg class="ic"><use href="#tc"/></svg><span class="kl">框柱<span class="m">(Z)</span></span></div>
          <div class="kid"><svg class="ic"><use href="#tc"/></svg><span class="kl">暗柱<span class="m">(Z)</span></span></div>
          <div class="kid"><svg class="ic"><use href="#tc"/></svg><span class="kl">端柱<span class="m">(Z)</span></span></div>
          <div class="kid lastk"><svg class="ic"><use href="#gz"/></svg><span class="kl">构造柱<span class="m">(Z)</span></span></div>
        </div>
        <div class="trow"><svg class="tchev"><use href="#chevd"/></svg><i class="tdash"></i><svg class="ic"><use href="#fopen"/></svg><span class="tlab">墙</span></div>
        <div class="kids">
          <div class="kid"><svg class="ic"><use href="#shear"/></svg><span class="kl">剪力墙<span class="m">(Q)</span></span></div>
          <div class="kid"><svg class="ic"><use href="#rf"/></svg><span class="kl">人防门框墙<span class="m">(RF)</span></span></div>
          <div class="kid"><svg class="ic"><use href="#brick"/></svg><span class="kl">砌体墙<span class="m">(Q)</span></span></div>
          <div class="kid"><svg class="ic"><use href="#hbeam"/></svg><span class="kl">暗梁<span class="m">(A)</span></span></div>
          <div class="kid lastk"><svg class="ic"><use href="#mas"/></svg><span class="kl">砌体加筋<span class="m">(Y)</span></span></div>
        </div>
        <div class="trow"><svg class="tchev"><use href="#chevr"/></svg><i class="tdash"></i><svg class="ic"><use href="#fclose"/></svg><span class="tlab">门窗洞</span></div>
        <div class="trow"><svg class="tchev"><use href="#chevd"/></svg><i class="tdash"></i><svg class="ic"><use href="#fopen"/></svg><span class="tlab">梁</span></div>
        <div class="kids">
          <div class="kid"><svg class="ic"><use href="#bm"/></svg><span class="kl">梁<span class="m">(L)</span></span></div>
          <div class="kid lastk"><svg class="ic"><use href="#ring"/></svg><span class="kl">圈梁<span class="m">(E)</span></span></div>
        </div>
        <div class="trow"><svg class="tchev"><use href="#chevr"/></svg><i class="tdash"></i><svg class="ic"><use href="#fclose"/></svg><span class="tlab">板</span></div>
        <div class="trow"><svg class="tchev"><use href="#chevd"/></svg><i class="tdash"></i><svg class="ic"><use href="#fopen"/></svg><span class="tlab">基础</span></div>
        <div class="kids">
          <div class="kid"><svg class="ic"><use href="#fbm"/></svg><span class="kl">基础梁<span class="m">(F)</span></span></div>
          <div class="kid"><svg class="ic"><use href="#raft"/></svg><span class="kl">筏板基础<span class="m">(M)</span></span></div>
          <div class="kid"><svg class="ic"><use href="#sump"/></svg><span class="kl">集水坑<span class="m">(K)</span></span></div>
          <div class="kid"><svg class="ic"><use href="#pier"/></svg><span class="kl">柱墩<span class="m">(Y)</span></span></div>
          <div class="kid"><svg class="ic"><use href="#rm"/></svg><span class="kl">筏板主筋<span class="m">(R)</span></span></div>
          <div class="kid"><svg class="ic"><use href="#rn"/></svg><span class="kl">筏板负筋<span class="m">(X)</span></span></div>
          <div class="kid ksel"><svg class="ic"><use href="#ind"/></svg><span class="kl">独立基础<span class="m">(P)</span></span></div>
          <div class="kid"><svg class="ic"><use href="#strip"/></svg><span class="kl">条形基础<span class="m">(T)</span></span></div>
          <div class="kid"><svg class="ic"><use href="#capv"/></svg><span class="kl">桩承台<span class="m">(V)</span></span></div>
          <div class="kid"><svg class="ic"><use href="#fbm"/></svg><span class="kl">承台梁<span class="m">(F)</span></span></div>
          <div class="kid"><svg class="ic"><use href="#pile"/></svg><span class="kl">桩<span class="m">(U)</span></span></div>
          <div class="kid lastk"><svg class="ic"><use href="#band"/></svg><span class="kl">基础板带<span class="m">(W)</span></span></div>
        </div>
        <div class="trow"><svg class="tchev"><use href="#chevr"/></svg><i class="tdash"></i><svg class="ic"><use href="#fclose"/></svg><span class="tlab">其它</span></div>
        <div class="trow"><svg class="tchev"><use href="#chevr"/></svg><i class="tdash"></i><svg class="ic"><use href="#fclose"/></svg><span class="tlab">自定义</span></div>
      </div>
      <div class="tscroll">
        <svg class="tsa"><use href="#chevu"/></svg>
        <div class="tthumb"></div>
        <svg class="tsa tsb"><use href="#chevd"/></svg>
      </div>
    </div>
    <div class="navbtn nb2">单构件输入</div>
    <div class="navbtn">报表预览</div>
  </aside>

  <main class="main">
    <div class="bar rowa">
      <div class="seg sa">
        <i class="hd"></i>
        <span class="it ml6 off"><svg class="ic"><use href="#del"/></svg>删除</span><i class="sep ml7"></i>
        <span class="it ml5 off"><svg class="ic"><use href="#copy"/></svg>复制</span>
        <span class="it ml8 off"><svg class="ic"><use href="#mirr"/></svg>镜像</span><i class="sep ml7"></i>
        <span class="it ml5 off"><svg class="ic"><use href="#move"/></svg>移动</span>
        <span class="it ml5 off"><svg class="ic"><use href="#roti"/></svg>旋转</span><i class="sep ml8"></i>
        <span class="it ml4 off"><svg class="ic"><use href="#ext"/></svg>延伸</span>
        <span class="it ml7 off"><svg class="ic"><use href="#trim"/></svg>修剪</span><i class="sep ml8"></i>
        <span class="it ml5 off"><svg class="ic"><use href="#brk"/></svg>打断</span>
        <span class="it ml7 off"><svg class="ic"><use href="#merg"/></svg>合并</span>
        <span class="it ml7 off"><svg class="ic"><use href="#splt"/></svg>分割</span><i class="sep ml7"></i>
        <span class="it ml5 off"><svg class="ic"><use href="#algn"/></svg>对齐</span><i class="dd ml2 ddoff"></i>
        <span class="it ml7 off"><svg class="ic"><use href="#offs"/></svg>偏移</span>
        <span class="it ml7 off"><svg class="ic"><use href="#strc"/></svg>拉伸</span><i class="sep ml8"></i>
        <span class="it ml4 off"><svg class="ic"><use href="#grip"/></svg>设置夹点</span>
      </div>
    </div>

    <div class="bar rowb">
      <div class="seg sb1">
        <i class="hd"></i>
        <div class="combo c57 ml2">基础层<i class="dd"></i></div>
        <div class="combo c69 ml3">基础<i class="dd"></i></div>
        <div class="combo c69 ml3">独立基础<i class="dd"></i></div>
        <div class="combo c69 ml3">DJ-101<i class="dd"></i></div>
        <div class="combo c69 ml3">整体<i class="dd"></i></div>
        <i class="sep ml5"></i>
        <span class="it ml6"><svg class="ic"><use href="#attr"/></svg>属性</span>
        <span class="it box ml3"><svg class="ic"><use href="#edit"/></svg>编辑钢筋</span>
        <span class="it ml3"><svg class="ic"><use href="#list"/></svg>构件列表</span>
        <span class="it ml8"><svg class="ic"><use href="#pick"/></svg>拾取构件</span>
      </div>
      <div class="seg sb2">
        <i class="hd"></i>
        <span class="it ml4"><svg class="ic"><use href="#twop"/></svg>两点</span>
        <span class="it ml8"><svg class="ic"><use href="#para"/></svg>平行</span>
        <span class="it ml6"><svg class="ic"><use href="#angl"/></svg>点角</span><i class="dd ml6"></i>
        <span class="it ml7"><svg class="ic"><use href="#tri"/></svg>三点辅轴</span><i class="dd ml6"></i>
        <span class="it ml7"><svg class="ic"><use href="#dela"/></svg>删除辅轴</span>
        <span class="it ml7"><svg class="ic"><use href="#dim"/></svg>尺寸标注</span><i class="dd ml6"></i>
      </div>
    </div>

    <div class="bar rowc">
      <div class="seg sc1">
        <i class="hd"></i>
        <span class="it ml6"><svg class="ic"><use href="#arrow"/></svg>选择</span><i class="dd ml6"></i><i class="sep ml7"></i>
        <span class="it ml5"><svg class="ic"><use href="#pt"/></svg>点</span>
        <span class="it ml7"><svg class="ic"><use href="#rotp"/></svg>旋转点</span><i class="sep ml8"></i>
        <span class="it ml5 off"><svg class="ic"><use href="#line"/></svg>直线</span>
        <span class="it ml7 off"><svg class="ic"><use href="#arc"/></svg>三点画弧</span><i class="dd ml5 ddoff"></i>
        <div class="combo cbx ml5"><i class="dd ddoff"></i></div>
        <span class="it ml4 off"><svg class="ic"><use href="#rect"/></svg>矩形</span><i class="sep ml7"></i>
        <span class="it ml5"><svg class="ic"><use href="#smart"/></svg>智能布置</span><i class="dd ml2"></i><i class="sep ml7"></i>
        <span class="it ml5 off"><svg class="ic"><use href="#adj"/></svg>调整钢筋方向</span>
        <span class="it ml7"><svg class="ic"><use href="#chk"/></svg>查改标注</span><i class="dd ml6"></i>
      </div>
      <div class="seg sc2"><i class="hd"></i></div>
    </div>

    <div class="canvas">
      <svg class="scene" viewBox="216 168 1150 325" width="1150" height="325">
        <g fill="none" stroke="#ff1010" stroke-width="1">
          <path d="M312 168L1366 405"/>
          <path d="M216 279L232 283"/>
          <path d="M393 318L1012 459"/>
          <path d="M606 368L818 168"/>
          <path d="M679 381L916 168"/>
          <path d="M805 411L845 374"/>
          <path d="M980 450L1012 420"/>
          <path d="M1277 362L1366 280"/>
          <path d="M1336 493L1366 465"/>
          <path d="M232 168L218 182"/>
        </g>
        <polygon points="844,341 865,321 865,345" fill="#007000"/>
        <polygon points="866,265 937,281 936,360 957,365 955,445 842,419 844,341 865,345" fill="#006000"/>
        <polygon points="866,265 970,168 1057,168 1014,209 937,281" fill="#007000"/>
        <polygon points="937,281 1014,209 1012,288 936,360" fill="#004c00"/>
        <polygon points="936,360 1012,288 1012,315 957,365" fill="#007000"/>
        <polygon points="957,365 1012,315 1011,395 955,445" fill="#004c00"/>
        <polygon points="1140,168 1215,168 1366,202 1366,282 1233,253 1233,219 1140,198" fill="#00b000"/>
        <polygon points="1215,168 1294,168 1366,184 1366,202" fill="#00e600"/>
        <polygon points="1014,209 1057,168 1140,168 1140,198 1233,219 1200,250" fill="#0072e6"/>
        <polygon points="1014,209 1200,250 1196,493 1008,493" fill="#005ab2"/>
        <polygon points="1200,250 1233,219 1233,253 1277,263 1273,472 1252,493 1196,493" fill="#004e9c"/>
        <g fill="none" stroke="#8c8c8c" stroke-width="1">
          <circle cx="791" cy="331" r="145"/>
          <circle cx="791" cy="186" r="9"/>
          <circle cx="791" cy="475" r="9"/>
          <circle cx="646" cy="331" r="9"/>
          <circle cx="936" cy="331" r="9"/>
          <path d="M936 322v18M646 322v18"/>
        </g>
        <path d="M545 223L786 276L786 341L545 286L545 223L431 329L431 393L545 286M431 329L672 382L786 276M672 382V446L431 393M672 446L786 341" fill="none" stroke="#8c8c8c" stroke-width="1.500"/>
        <path d="M545 222L786 275M431 328L672 381" stroke="#ff1010" stroke-width="1.200" stroke-dasharray="9 2" fill="none"/>
        <path d="M438 386L670 437M449 376L681 427M460 366L692 417M471 356L703 407M482 346L714 397M492.500 336.500L724.500 387.500M503 327L735 378M514 317L746 368M525 307L757 358M536 297L768 348M547 287L779 338M438 386L547 287M461 391L570 292M484 396L593 297M508 401L617 302M531 406L640 307M554 411.500L663 312.500M577 417L686 318M600 422L709 323M624 427L733 328M647 432L756 333M670 437L779 338" fill="none" stroke="#a49c96" stroke-width="1"/>
        <path d="M438 386c-4-1-6-5-2-6s5 2 3 4M449 376c-4-1-6-5-2-6s5 2 3 4M460 366c-4-1-6-5-2-6s5 2 3 4M471 356c-4-1-6-5-2-6s5 2 3 4M482 346c-4-1-6-5-2-6s5 2 3 4M492 336c-4-1-6-5-2-6s5 2 3 4M503 327c-4-1-6-5-2-6s5 2 3 4M514 317c-4-1-6-5-2-6s5 2 3 4M525 307c-4-1-6-5-2-6s5 2 3 4M536 297c-4-1-6-5-2-6s5 2 3 4M547 287c-4-1-6-5-2-6s5 2 3 4M670 437c4 1 5-3 2-6M681 427c4 1 5-3 2-6M692 417c4 1 5-3 2-6M703 407c4 1 5-3 2-6M714 397c4 1 5-3 2-6M724 387c4 1 5-3 2-6M735 378c4 1 5-3 2-6M746 368c4 1 5-3 2-6M757 358c4 1 5-3 2-6M768 348c4 1 5-3 2-6M779 338c4 1 5-3 2-6M461 391c-2 0-3-3-1-7M484 396c-2 0-3-3-1-7M508 401c-2 0-3-3-1-7M531 406c-2 0-3-3-1-7M554 411c-2 0-3-3-1-7M577 417c-2 0-3-3-1-7M600 422c-2 0-3-3-1-7M624 427c-2 0-3-3-1-7M647 432c-2 0-3-3-1-7M570 292c2-1 3-4 0-7M593 297c2-1 3-4 0-7M617 302c2-1 3-4 0-7M640 307c2-1 3-4 0-7M663 312c2-1 3-4 0-7M686 318c2-1 3-4 0-7M709 323c2-1 3-4 0-7M733 328c2-1 3-4 0-7M756 333c2-1 3-4 0-7" fill="none" stroke="#a49c96" stroke-width="1"/>
        <path d="M272 443V405" stroke="#0a7cff" stroke-width="2"/><path d="M272 400l4 12h-8z" fill="#0a7cff"/>
        <path d="M272 443L289 428" stroke="#14e014" stroke-width="2.500"/><path d="M293 424l-2 7-5-5z" fill="#14e014"/>
        <path d="M272 443L308 452" stroke="#ff1010" stroke-width="3"/><path d="M316 452l-10 5 2-8z" fill="#ff1010"/>
        <text x="260" y="402" class="ax" fill="#0a7cff">Z</text>
        <text x="297" y="434" class="ax" fill="#14e014">Y</text>
        <text x="311" y="450" class="ax" fill="#ff1010">X</text>
      </svg>
      <div class="ctrl">
        <div class="ctitle">钢筋显示控制面板</div>
        <div class="clist">
          <div class="cck"><svg class="cb"><use href="#ck"/></svg>横向底筋</div>
          <div class="cck"><svg class="cb"><use href="#ck"/></svg>纵向底筋</div>
          <div class="cck"><svg class="cb"><use href="#ck"/></svg>显示其它图元</div>
          <div class="cck"><svg class="cb"><use href="#ck"/></svg>显示详细公式</div>
        </div>
      </div>
    </div>

    <div class="bar rowd">
      <div class="seg sd1">
        <i class="hd"></i>
        <span class="it ml5"><svg class="ic"><use href="#orth"/></svg>正交</span>
        <span class="it box ml4"><svg class="ic"><use href="#snap"/></svg>对象捕捉</span>
        <span class="it ml3"><svg class="ic"><use href="#dyn"/></svg>动态输入</span>
      </div>
      <div class="seg sd2">
        <i class="hd"></i>
        <span class="it ml5"><svg class="ic"><use href="#cross"/></svg>交点</span>
        <span class="it box ml4"><svg class="ic"><use href="#perp"/></svg>垂点</span>
        <span class="it box"><svg class="ic"><use href="#midp"/></svg>中点</span>
        <span class="it ml3"><svg class="ic"><use href="#vert"/></svg>顶点</span>
        <span class="it ml7"><svg class="ic"><use href="#coor"/></svg>坐标</span>
      </div>
      <div class="seg sd3">
        <i class="hd"></i>
        <div class="combo c58 ml3">不偏移<i class="dd"></i></div>
        <i class="sep ml6"></i>
        <span class="ml2 grey">X=</span>
        <div class="spin s57 ml3">0<span class="arrows"><i class="au"></i><i class="ad"></i></span></div>
        <span class="ml2 grey">mm</span>
        <span class="ml4 grey">Y=</span>
        <div class="spin s58 ml5">0<span class="arrows"><i class="au"></i><i class="ad"></i></span></div>
        <span class="ml2 grey">mm</span>
        <i class="sep ml5"></i>
        <i class="box10 ml3"></i>
        <span class="ml9">旋转</span>
        <div class="spin s68 ml4">0.000<span class="arrows"><i class="au"></i><i class="ad"></i></span></div>
        <span class="ml4 grey">°</span>
      </div>
    </div>

    <div class="lower">
      <div class="dots"><svg class="xs" viewBox="0 0 10 8"><path d="M0 0h10v8H0z" fill="#ddd"/><path d="M2 1l6 6M8 1L2 7" stroke="#a03030"/></svg></div>
      <div class="gridp">
        <div class="seg rowe">
          <svg class="nv"><use href="#first"/></svg>
          <svg class="nv ml16"><use href="#prev"/></svg>
          <svg class="nv ml13"><use href="#next"/></svg>
          <svg class="nv ml13"><use href="#last"/></svg>
          <i class="sep ml9"></i>
          <svg class="nv ml8"><use href="#up"/></svg>
          <svg class="nv ml12"><use href="#down"/></svg>
          <i class="sep ml10"></i>
          <span class="it ml5 off"><svg class="ic"><use href="#ins"/></svg>插入</span>
          <span class="it ml6 off"><svg class="ic"><use href="#dele"/></svg>删除</span>
          <span class="it ml7"><svg class="ic"><use href="#scal"/></svg>缩尺配筋</span>
          <span class="it ml8"><svg class="ic"><use href="#info"/></svg>钢筋信息</span>
          <span class="it ml7"><svg class="ic"><use href="#lib"/></svg>钢筋图库</span>
          <span class="it ml7"><svg class="ic"><use href="#oth"/></svg>其他</span><i class="dd ml2"></i>
          <span class="ml9">关闭</span>
          <i class="sep ml8"></i>
          <span class="ml5">单构件钢筋总重(kg)：20.972</span>
        </div>
        <div class="gridf">
          <div class="gridb">
            <div class="gridw">
              <table class="gt">
                <colgroup><col class="c0"><col class="c1"><col class="c2"><col class="c3"><col class="c4"><col class="c5"><col class="c6"><col class="c7"><col class="c8"><col class="c9"><col class="c10"><col class="c11"><col class="c12"><col class="c13"></colgroup>
                <thead><tr><th></th><th>筋号</th><th>直径<span class="m">(mm)</span></th><th>级别</th><th>图号</th><th>图形</th><th>计算公式</th><th>公式描述</th><th>长度<span class="m">(mm)</span></th><th class="hot">根数</th><th>搭接</th><th>损耗<span class="m">(%)</span></th><th>单重<span class="m">(kg)</span></th><th>总重<span class="m">(</span></th></tr></thead>
                <tbody>
                  <tr><td class="rh cur">1*</td><td class="frz c">横向底筋<span class="m">.1</span></td><td>10</td><td class="c ctr">中</td><td>3</td><td class="sh"><div class="shape"><span class="len">1420</span><i class="rb"></i></div></td><td>1500-40-40+12.5*d</td><td class="c"><div class="wr">净长-保护层-保护层+两倍弯<br>钩</div></td><td>1545</td><td class="act">2</td><td>0</td><td>0</td><td>0.953</td><td>1.907</td></tr>
                  <tr><td class="rh">2</td><td class="frz c">横向底筋<span class="m">.2</span></td><td>10</td><td class="c ctr">中</td><td>3</td><td class="sh"><div class="shape"><span class="len">1420</span><i class="rb"></i></div></td><td>1500-40-40+12.5*d</td><td class="c"><div class="wr">净长-保护层-保护层+两倍弯<br>钩</div></td><td>1545</td><td>9</td><td>0</td><td>0</td><td>0.953</td><td>8.579</td></tr>
                  <tr><td class="rh">3</td><td class="frz c">纵向底筋<span class="m">.1</span></td><td>10</td><td class="c ctr">中</td><td>3</td><td class="sh"><div class="shape"><span class="len">1420</span><i class="rb"></i></div></td><td>1500-40-40+12.5*d</td><td class="c"><div class="wr">净长-保护层-保护层+两倍弯<br>钩</div></td><td>1545</td><td>2</td><td>0</td><td>0</td><td>0.953</td><td>1.907</td></tr>
                  <tr><td class="rh">4</td><td class="frz c">纵向底筋<span class="m">.2</span></td><td>10</td><td class="c ctr">中</td><td>3</td><td class="sh"><div class="shape"><span class="len">1420</span><i class="rb"></i></div></td><td>1500-40-40+12.5*d</td><td class="c"><div class="wr">净长-保护层-保护层+两倍弯<br>钩</div></td><td>1545</td><td>9</td><td>0</td><td>0</td><td>0.953</td><td>8.579</td></tr>
                </tbody>
              </table>
            </div>
            <div class="vs"><svg class="sar"><use href="#chevu"/></svg><div class="vthumb"></div><svg class="sar sab"><use href="#chevd"/></svg></div>
          </div>
          <div class="hs"><svg class="sar"><use href="#chevl"/></svg><div class="hthumb"></div><svg class="sar sab2"><use href="#chevrd"/></svg></div>
        </div>
      </div>
    </div>
  </main>
</div>

<footer class="status">
  <div class="st st1 m">X=86072 Y=4605</div>
  <div class="st st2">层高<span class="m">:2.15m</span></div>
  <div class="st st3">底标高<span class="m">:-2.2m</span></div>
  <div class="st st4 m">1(1)</div>
  <div class="st st5"></div>
  <div class="st st6 m">217.9 FPS</div>
</footer>

<footer class="task">
  <div class="start"><svg class="wlogo" viewBox="0 0 16 16"><path d="M0 2.500l7-1v6H0zM8 1.300L16 0v7.500H8zM0 8.500h7v6l-7-1zM8 8.500h8V16l-8-1.300z" fill="#fff"/></svg></div>
  <div class="search"><i class="cort"></i><span class="stext">在这里输入你要搜索的内容</span><svg class="mic" viewBox="0 0 16 16"><rect x="5.500" y="0.500" width="5" height="10" rx="2.500" fill="none" stroke="#8a8a8a"/><path d="M3 7c0 6 10 6 10 0M8 12v3M5 15.500h6" fill="none" stroke="#8a8a8a"/></svg></div>
  <div class="tk w48"><svg class="ti" viewBox="0 0 20 20"><rect x="5" y="2" width="10" height="16" fill="none" stroke="#fff" stroke-width="1.500"/><path d="M3 5H1v10h2M17 5h2v10h-2" fill="none" stroke="#fff"/></svg></div>
  <div class="tk w52"><svg class="ti" viewBox="0 0 20 20"><path d="M9 9C3 9 0 6 2 3c2-3 7-2 7 6zM11 9c0-6 3-9 6-7s2 7-6 7zM11 11c6 0 9 3 7 6s-7 2-7-6zM9 11c0 6-3 9-6 7s-2-7 6-7z" fill="#d8d8d8"/></svg></div>
  <div class="tk w52"><svg class="ti" viewBox="0 0 20 20"><path d="M3 10h14c0-9-14-9-14 0 0 9 11 9 14 4" fill="none" stroke="#e8e8e8" stroke-width="3"/><path d="M2 18c5 1 13-6 16-16" fill="none" stroke="#ddd"/></svg></div>
  <div class="tk w52"><svg class="ti" viewBox="0 0 20 20"><circle cx="8" cy="11" r="7" fill="none" stroke="#ccc" stroke-width="1.500"/><path d="M5 12c0-5 7-5 7 0s-5 3-4 0" fill="none" stroke="#ccc"/><path d="M15 1c2 0 3 2 3 4l2 3H10l2-3c0-2 1-4 3-4z" fill="#f0a818"/></svg></div>
  <div class="tk w46"><svg class="ti" viewBox="0 0 20 20"><path d="M4 10h13c0-9-14-9-15 1 0 9 12 10 15 4v-2c-4 4-10 3-10-2" fill="#1478d8"/><path d="M6 8c0-3 6-3 7 0z" fill="#040f16"/></svg></div>
  <div class="tk w44"><svg class="ti" viewBox="0 0 20 20"><path d="M4 10h13c0-9-14-9-15 1 0 9 12 10 15 4v-2c-4 4-10 3-10-2" fill="#2c9cf0"/><path d="M6 8c0-3 6-3 7 0z" fill="#040f16"/><path d="M1 19C0 14 10 3 19 1c2 3-2 7-3 8" fill="none" stroke="#f4c418" stroke-width="1.300"/></svg></div>
  <div class="tk w46 run"><svg class="ti" viewBox="0 0 20 20"><path d="M1 3h7l2 2h9v13H1z" fill="#f4d060"/><rect x="7" y="9" width="7" height="9" fill="#3a9ae0"/><path d="M1 5h18" stroke="#d8a830"/></svg></div>
  <div class="tk w46 run"><svg class="ti" viewBox="0 0 20 20"><circle cx="10" cy="10" r="9" fill="#7ac83a"/><path d="M5 10h10c0-6-10-6-10 0s8 6 10 2" fill="none" stroke="#fff" stroke-width="2"/><path d="M3 19C6 18 17 8 17 2" fill="none" stroke="#3a8a20"/></svg></div>
  <div class="tk w44 run"><svg class="ti" viewBox="0 0 20 20"><rect x="1" y="1" width="18" height="18" rx="2" fill="#f0a828"/><rect x="4" y="5" width="11" height="12" fill="#fbefcf"/><path d="M6 8h7M6 11h7M6 14h5" stroke="#a07030"/><path d="M9 12l8-11 2 1-8 11z" fill="#c83820"/></svg></div>
  <div class="tk w44 run act2"><svg class="ti big2" viewBox="0 0 24 24"><rect width="24" height="24" rx="4" fill="#0a90f4"/><path d="M12 5v13M6 10c0 5 1 5 6 5s6 0 6-5M8.500 6h7" stroke="#fff" stroke-width="2" fill="none"/></svg></div>
  <div class="tk w44 run"><svg class="ti big2" viewBox="0 0 24 24"><path d="M17 2C9 2 3 7 3 13c0 7 7 10 12 9 5-1 6-6 4-10h-7l3 3c1 3-4 4-6 1-2-4 2-9 8-9l5-1c-2-2-3-4-5-4z" fill="#1a9ae8"/></svg></div>
  <span class="tray ml13">链接</span>
  <div class="cpu ml21"><span>34%</span><span>CPU使用</span></div>
  <svg class="tri12 ml20" viewBox="0 0 12 8"><path d="M1 7l5-5 5 5" fill="none" stroke="#fff" stroke-width="1.200"/></svg>
  <svg class="ti16 ml12" viewBox="0 0 16 16"><path d="M8 1c3 0 4 2 4 5 0 3 1 5 2 6H2c1-1 2-3 2-6 0-3 1-5 4-5zM6 13a2 2 0 0 0 4 0z" fill="#fff"/></svg>
  <svg class="ti16 ml9" viewBox="0 0 16 16"><rect x="4" y="6" width="11" height="7" fill="none" stroke="#fff"/><rect x="5" y="7" width="8" height="5" fill="#fff"/><path d="M1 4h5M3 2v4" stroke="#fff"/></svg>
  <svg class="ti16 ml11" viewBox="0 0 16 16"><path d="M2 13c1-6 5-9 11-10M5 14c1-4 3-6 8-7M8 14c1-2 2-3 5-4" fill="none" stroke="#ccc"/><circle cx="2.500" cy="14" r="1" fill="#fff"/></svg>
  <svg class="ti16 ml6" viewBox="0 0 16 16"><path d="M1 6h3l4-4v12l-4-4H1z" fill="none" stroke="#fff"/><path d="M10 6c1 1 1 3 0 4M12 4c2 2 2 6 0 8" fill="none" stroke="#ccc"/></svg>
  <svg class="tikey ml9" viewBox="0 0 22 16"><rect x="0.500" y="2.500" width="21" height="12" fill="none" stroke="#fff"/><path d="M3 5.500h16M3 8.500h16" stroke="#fff" stroke-dasharray="1.500 1"/><path d="M6 11.500h10" stroke="#fff"/></svg>
  <span class="ta ml10">A</span>
  <svg class="ti16 ml14" viewBox="0 0 16 16"><rect x="1" y="1" width="14" height="14" rx="2" fill="#f04a14" transform="rotate(-6 8 8)"/><path d="M12 4c-1-1-7-1-7 1.500S11 8 11 10.500 6 13 4 12" fill="none" stroke="#fff" stroke-width="2"/></svg>
  <div class="clock ml17"><span>10:47</span><span>2018/7/19</span></div>
  <svg class="ti16 ml19" viewBox="0 0 16 16"><path d="M1 2h14v10h-5l-2 2.500L6 12H1z" fill="none" stroke="#fff"/></svg>
</footer>
</div>
</body>
</html>
```

FILE: styles.css
```css
* { box-sizing: border-box; }
html, body { margin: 0; padding: 0; }
body {
  width: 1366px; height: 768px; overflow: hidden; background: #f0f0f0; color: #1a1a1a;
  font: 12px/16px "Noto Sans CJK SC", "Liberation Sans", sans-serif;
}
.defs { width: 0; height: 0; position: absolute; }
i { font-style: normal; }
.app { position: relative; width: 1366px; height: 768px; display: flex; flex-direction: column; overflow: hidden; }
.m { font-family: "DejaVu Sans Mono", "Noto Sans CJK SC", monospace; font-size: 10px; }

/* spacing helpers */
.mln3 { margin-left: -3px; }
.ml2 { margin-left: 2px; } .ml3 { margin-left: 3px; } .ml4 { margin-left: 4px; } .ml5 { margin-left: 5px; }
.ml6 { margin-left: 6px; } .ml7 { margin-left: 7px; } .ml8 { margin-left: 8px; } .ml9 { margin-left: 9px; }
.ml10 { margin-left: 10px; } .ml11 { margin-left: 11px; } .ml12 { margin-left: 12px; } .ml13 { margin-left: 13px; }
.ml14 { margin-left: 14px; } .ml16 { margin-left: 16px; } .ml17 { margin-left: 17px; } .ml19 { margin-left: 19px; }
.ml20 { margin-left: 20px; } .ml21 { margin-left: 21px; } .ml31 { margin-left: 31px; } .ml38 { margin-left: 38px; } .ml39 { margin-left: 39px; }

/* title */
.title { height: 23px; background: #fff; display: flex; align-items: center; padding-left: 3px; }
.appic { width: 15px; height: 15px; }
.ttext { margin-left: 4px; white-space: nowrap; font-size: 12.6px; color: #222; }
.winbtns { margin-left: auto; display: flex; }
.winbtns svg { width: 46px; height: 23px; }
.ime { position: absolute; left: 968px; top: 0; width: 208px; height: 28px; }
.imegreen { position: absolute; left: 4px; top: 0; width: 46px; height: 5px; background: #45b848; }
.imes { position: absolute; left: 0; top: 4px; width: 29px; height: 24px; }
.imebar { position: absolute; left: 26px; top: 3px; width: 182px; height: 24px; background: #fff; border: 1px solid #b0c8e0; display: flex; align-items: center; gap: 6px; padding-left: 7px; }
.imea { width: 16px; text-align: center; color: #1a70c8; font: 21px/20px "Liberation Sans", sans-serif; }

/* menu */
.menu { height: 31px; display: flex; align-items: center; padding: 0 0 2px 7px; background: linear-gradient(#f7f7f7, #f4f4f4); white-space: nowrap; }
.mi { margin-right: 10.6px; }
.gap5 { gap: 5px; }
.big { width: 16px; height: 16px; }
.phone { letter-spacing: .3px; }
.tip { width: 188px; height: 29px; margin-left: 6px; margin-top: 2px; background: linear-gradient(#fafafa, #f2f2f2); color: #0e7a80; line-height: 27px; padding-left: 29px; }

.it { display: inline-flex; align-items: center; gap: 4px; white-space: nowrap; }
.ic { width: 16px; height: 16px; flex: none; }
.sig { width: 13px; font: 700 13px/16px "Liberation Serif", serif; text-align: center; }
.chev { font: 700 11px/14px "Liberation Sans", sans-serif; width: 8px; }
.dd { display: inline-block; flex: none; width: 6px; height: 3px; border-top: 3px solid #222; border-left: 3px solid transparent; border-right: 3px solid transparent; }
.ddoff { border-top-color: #aaa; }
.sep { display: block; flex: none; width: 1px; height: 20px; background: #bcbcbc; }
.hd { display: block; flex: none; width: 2px; height: 16px; background: repeating-linear-gradient(#a0a0a0 0 2px, transparent 2px 4px); }
.off { color: #a6a6a6; }
.grey { color: #9a9a9a; }
.seg { display: flex; align-items: center; background: linear-gradient(#fdfdfd, #f4f4f4); border-radius: 2px; white-space: nowrap; }
.seg > span { flex: none; }
.box { border: 1px solid #0a7fd8; background: #e3f0fb; padding: 0 3px 0 2px; height: 23px; }

.tb1 { height: 27px; margin-bottom: 3px; display: flex; background: #f0f0f0; }
.s1a { width: 151px; padding-left: 4px; }
.s1b { width: 547px; margin-left: 2px; padding-left: 4px; }
.s1c { width: 661px; margin-left: 5px; padding-left: 3px; }

/* workspace */
.work { height: 621px; display: flex; }
.nav { width: 213px; display: flex; flex-direction: column; }
.navhead { height: 16px; background: #0058e0; color: #fff; font-size: 12.6px; line-height: 15px; display: flex; align-items: center; flex: none; white-space: nowrap; }
.navic { width: 12px; height: 12px; margin-left: auto; margin-right: 7px; }
.navx { margin-left: 0; margin-right: 3px; }
.navbtn { height: 22px; flex: none; margin: 0 1px; border: 1px solid #a4a4a4; border-top-color: #c8c8c8; background: linear-gradient(#fff, #f0f0f0); text-align: center; line-height: 20px; }
.nb2 { margin-top: 1px; }
.treebar { height: 27px; flex: none; margin: 0 1px 0 2px; background: linear-gradient(#fff, #eee); display: flex; align-items: center; padding-left: 5px; }
.plusmin { width: 40px; height: 18px; }
.tree { height: 489px; flex: none; margin: 0 1px 0 2px; border: 1px solid #9a9a9a; border-width: 1px 2px 2px; display: flex; background: #fff; overflow: hidden; }
.treelist { flex: 1; min-width: 0; padding-top: 2px; overflow: hidden; }
.trow { height: 16px; display: flex; align-items: center; padding-left: 6px; white-space: nowrap; }
.tchev { width: 10px; height: 10px; flex: none; }
.tdash { display: block; width: 5px; height: 1px; margin-left: 1px; background: repeating-linear-gradient(90deg, #888 0 1px, transparent 1px 2px); }
.tlab { margin-left: 5px; }
.kids { margin-left: 11px; padding-left: 19px; background: repeating-linear-gradient(#888 0 1px, transparent 1px 2px) 0 0 / 1px 100% no-repeat; }
.kid {
  height: 16px; display: flex; align-items: center; padding-left: 11px; white-space: nowrap;
  background:
    repeating-linear-gradient(90deg, #888 0 1px, transparent 1px 2px) 0 8px / 11px 1px no-repeat,
    repeating-linear-gradient(#888 0 1px, transparent 1px 2px) 0 0 / 1px 100% no-repeat;
}
.lastk {
  background:
    repeating-linear-gradient(90deg, #888 0 1px, transparent 1px 2px) 0 8px / 11px 1px no-repeat,
    repeating-linear-gradient(#888 0 1px, transparent 1px 2px) 0 0 / 1px 8px no-repeat;
}
.ksel {
  background:
    repeating-linear-gradient(90deg, #888 0 1px, transparent 1px 2px) 0 8px / 9px 1px no-repeat,
    repeating-linear-gradient(#888 0 1px, transparent 1px 2px) 0 0 / 1px 100% no-repeat,
    linear-gradient(#d4d4d4, #d4d4d4) 9px 0 / 93px 100% no-repeat;
}
.kl { margin-left: 3px; padding-left: 2px; height: 16px; }
.tscroll { width: 16px; flex: none; margin-right: 1px; display: flex; flex-direction: column; background: #f2f2f2; align-items: center; }
.tsa { width: 10px; height: 10px; flex: none; margin-top: 4px; }
.tsb { margin-top: 0; margin-bottom: 4px; }
.tthumb { width: 16px; height: 307px; margin-top: 86px; margin-bottom: auto; background: #cdcdcd; }

.main { width: 1150px; margin-left: 3px; display: flex; flex-direction: column; }
.bar { display: flex; flex: none; }
.rowa { height: 24px; margin-bottom: 2px; }
.rowb { height: 28px; margin-bottom: 2px; }
.rowc { height: 26px; margin-bottom: 2px; }
.rowd { height: 29px; margin-bottom: 4px; margin-top: 1px; }
.sa { width: 790px; margin-left: 1px; padding-left: 3px; }
.sb1 { width: 639px; margin-left: 1px; padding-left: 5px; }
.sb2 { width: 422px; margin-left: 2px; padding-left: 4px; }
.sc1 { width: 714px; margin-left: 1px; padding-left: 3px; }
.sc2 { width: 31px; margin-left: 2px; padding-left: 3px; background: #fff; }
.sd1 { width: 210px; padding-left: 5px; }
.sd2 { width: 263px; margin-left: 2px; padding-left: 4px; }
.sd3 { width: 410px; margin-left: 2px; padding-left: 4px; }
.combo { height: 23px; background: #fff; display: flex; align-items: center; justify-content: space-between; padding: 0 3px 0 2px; flex: none; }
.c57 { width: 57px; } .c58 { width: 58px; } .c69 { width: 69px; }
.cbx { width: 56px; height: 21px; border: 1px solid #aaa; justify-content: flex-end; }

/* 3D canvas */
.canvas { position: relative; height: 325px; flex: none; background: #000; overflow: hidden; }
.scene { display: block; }
.ax { font: 14px "Liberation Sans", sans-serif; }
.ctrl { position: absolute; left: 11px; top: 3px; width: 166px; height: 177px; background: #fff; display: flex; flex-direction: column; }
.ctitle { height: 31px; line-height: 30px; padding-left: 8px; color: #a8a8a8; }
.clist { flex: 1; border: 2px solid #8a8a8a; border-top-width: 1px; padding-top: 1px; background: #fff; }
.cck { display: flex; align-items: center; height: 12px; line-height: 12px; padding-left: 3px; color: #111; white-space: nowrap; }
.cb { display: block; width: 11px; height: 11px; margin-right: 4px; flex: none; }

.spin { height: 23px; border: 1px solid #8a8a8a; background: #fff; color: #999; display: flex; align-items: center; justify-content: flex-end; gap: 9px; padding-right: 3px; font-size: 13px; flex: none; }
.s57 { width: 57px; } .s58 { width: 58px; } .s68 { width: 68px; }
.arrows { display: flex; flex-direction: column; gap: 7px; }
.au { display: block; width: 6px; height: 3px; border-bottom: 3px solid #555; border-left: 3px solid transparent; border-right: 3px solid transparent; }
.ad { display: block; width: 6px; height: 3px; border-top: 3px solid #555; border-left: 3px solid transparent; border-right: 3px solid transparent; }
.box10 { display: block; width: 11px; height: 11px; border: 1px solid #999; background: #fff; flex: none; }

/* lower panel */
.lower { height: 178px; flex: none; display: flex; }
.dots { width: 13px; flex: none; padding: 3px 0 0 2px; background: repeating-linear-gradient(#c8c8c8 0 1px, transparent 1px 3px) 6px 14px / 1px 100% no-repeat; }
.xs { display: block; width: 10px; height: 8px; }
.gridp { width: 1137px; display: flex; flex-direction: column; }
.rowe { height: 25px; flex: none; padding-left: 7px; margin-bottom: 1px; white-space: nowrap; }
.nv { width: 10px; height: 16px; flex: none; }
.gridf { flex: 1; border: 1px solid #a8a8a8; border-right: 2px solid #e8e8e8; display: flex; flex-direction: column; background: #f0f0f0; }
.gridb { display: flex; height: 134px; }
.gridw { width: 1117px; height: 134px; overflow: hidden; }
.gt { width: 1117px; border-collapse: separate; border-spacing: 0; table-layout: fixed; }
.c0 { width: 34px; } .c1 { width: 72px; } .c2 { width: 56px; } .c3 { width: 37px; } .c4 { width: 33px; } .c5 { width: 200px; } .c6 { width: 166px; }
.c7 { width: 157px; } .c8 { width: 60px; } .c9 { width: 118px; } .c10 { width: 39px; } .c11 { width: 48px; } .c12 { width: 61px; } .c13 { width: 36px; }
.gt th { height: 20px; padding: 0; font-weight: 400; background: linear-gradient(#fff, #f1f1f1); border-right: 1px solid #b8b8b8; border-bottom: 1px solid #b8b8b8; white-space: nowrap; overflow: hidden; color: #222; }
.gt th.hot { background: linear-gradient(#fbdca8, #f6c46c); color: #5a1090; }
.gt td { height: 29px; padding: 1px 0 0 2px; background: #ccfed6; border-right: 1px solid #b8b8b8; border-bottom: 1px solid #b8b8b8; font: 10px/12px "DejaVu Sans Mono", "Noto Sans CJK SC", monospace; white-space: nowrap; overflow: hidden; }
.gt td.c { font: 12px/12px "Noto Sans CJK SC", sans-serif; padding-top: 0; }
.gt td.ctr { text-align: center; padding: 0; font-size: 10px; }
.gt td.rh { background: linear-gradient(#f9f9f9, #eee); text-align: center; padding: 0; font-size: 10px; }
.gt td.cur { background: #ffd48a; color: #5a1090; }
.gt td.act { background: #aee8d8; }
.gt td.frz { border-right: 1px solid #000; }
.gt td.sh { padding: 0; }
.shape { display: flex; flex-direction: column; align-items: center; }
.len { color: #e00000; font: 11px/12px "Liberation Sans", sans-serif; margin-bottom: 1px; margin-top: -1px; }
.rb { display: block; width: 132px; height: 5px; border: solid #000; border-width: 0 3px 2px; }
.wr { height: 28px; padding-top: 3px; line-height: 12px; overflow: hidden; }
.vs { width: 17px; display: flex; flex-direction: column; align-items: center; background: #f0f0f0; }
.sar { display: block; width: 10px; height: 10px; flex: none; margin: 5px 0 4px; }
.sab { margin-top: auto; margin-bottom: 5px; }
.vthumb { width: 16px; height: 31px; background: #cdcdcd; }
.hs { height: 16px; display: flex; align-items: center; padding-left: 3px; }
.hs .sar { margin: 0; }
.hthumb { width: 663px; height: 16px; margin-left: 1px; background: #cdcdcd; }
.hs .sab2 { margin-left: auto; margin-right: 22px; }

/* status */
.status { height: 20px; margin-top: 3px; display: flex; gap: 2px; flex: none; }
.st { height: 19px; border: 1px solid #dcdcdc; background: #f2f2f2; padding-left: 1px; line-height: 18px; white-space: nowrap; overflow: hidden; }
.st1 { width: 148px; } .st2 { width: 78px; } .st3 { width: 98px; } .st4 { width: 48px; padding-left: 2px; } .st5 { width: 914px; } .st6 { width: 70px; }

/* taskbar */
.task { height: 40px; flex: none; display: flex; align-items: center; background: #040f16; color: #fff; white-space: nowrap; }
.start { width: 48px; height: 40px; background: #000; display: flex; align-items: center; justify-content: center; flex: none; }
.wlogo { width: 16px; height: 16px; }
.search { width: 344px; height: 40px; background: #333; display: flex; align-items: center; padding-left: 11px; flex: none; }
.cort { display: block; width: 20px; height: 20px; border-radius: 50%; border: 2px solid #e8e8e8; flex: none; }
.stext { margin-left: 5px; color: #8c8c8c; font-size: 14px; }
.mic { width: 16px; height: 16px; margin-left: auto; margin-right: 13px; }
.tk { height: 40px; display: flex; align-items: center; justify-content: center; flex: none; }
.ti { width: 20px; height: 20px; }
.big2 { width: 24px; height: 24px; }
.w44 { width: 44px; } .w46 { width: 46px; } .w48 { width: 48px; } .w52 { width: 52px; }
.run { background: linear-gradient(#6cb2f4, #6cb2f4) center bottom / 36px 2px no-repeat; }
.act2 { background: linear-gradient(#6cb2f4, #6cb2f4) center bottom / 100% 2px no-repeat, #343d44; }
.tray { color: #e8e8e8; }
.cpu, .clock { display: flex; flex-direction: column; align-items: center; line-height: 18px; font-size: 12px; }
.tri12 { width: 12px; height: 8px; flex: none; }
.ti16 { width: 16px; height: 16px; flex: none; }
.tikey { width: 22px; height: 16px; flex: none; }
.ta { width: 14px; font: 20px/20px "Liberation Sans", sans-serif; text-align: center; }
```
